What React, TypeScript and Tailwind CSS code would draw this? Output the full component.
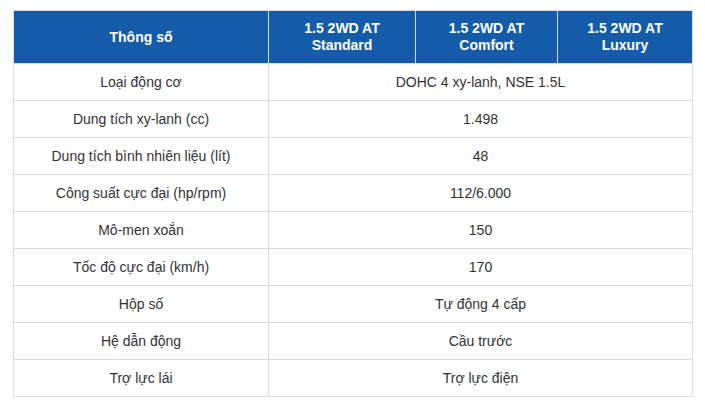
import React from 'react';

const rows: [string, string][] = [
  ['Loại động cơ', 'DOHC 4 xy-lanh, NSE 1.5L'],
  ['Dung tích xy-lanh (cc)', '1.498'],
  ['Dung tích bình nhiên liệu (lít)', '48'],
  ['Công suất cực đại (hp/rpm)', '112/6.000'],
  ['Mô-men xoắn', '150'],
  ['Tốc độ cực đại (km/h)', '170'],
  ['Hộp số', 'Tự động 4 cấp'],
  ['Hệ dẫn động', 'Cầu trước'],
  ['Trợ lực lái', 'Trợ lực điện'],
];

export default function App() {
  return (
    <div className="w-[705px] h-[412px] bg-white pt-[10px] pl-[13px] font-['Liberation_Sans',Arial,sans-serif] text-[14px] text-[#333]">
      <table className="w-[679px] table-fixed border-collapse border border-[#ddd]">
        <colgroup>
          <col className="w-[255px]" />
          <col className="w-[147px]" />
          <col className="w-[142px]" />
          <col className="w-[135px]" />
        </colgroup>
        <thead>
          <tr className="h-[53px] bg-[#145ca9] text-white font-bold leading-[17px]">
            <th className="border border-[#ddd] font-bold">Thông số</th>
            <th className="border border-[#ddd] font-bold">1.5 2WD AT<br />Standard</th>
            <th className="border border-[#ddd] font-bold">1.5 2WD AT<br />Comfort</th>
            <th className="border border-[#ddd] font-bold">1.5 2WD AT<br />Luxury</th>
          </tr>
        </thead>
        <tbody>
          {rows.map(([label, value]) => (
            <tr key={label} className="h-[37px]">
              <td className="border border-[#ddd] text-center">{label}</td>
              <td colSpan={3} className="border border-[#ddd] text-center">{value}</td>
            </tr>
          ))}
        </tbody>
      </table>
    </div>
  );
}
